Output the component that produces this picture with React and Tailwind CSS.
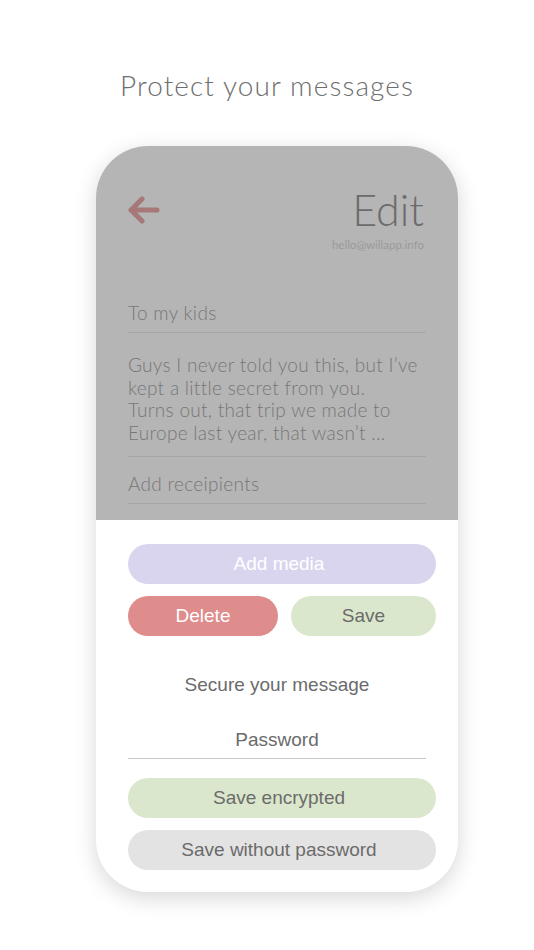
import React from 'react';

const SANS = { fontFamily: '"Liberation Sans", Arial, sans-serif' };

function BackArrow() {
    return (
        <svg width="32" height="28" viewBox="0 0 32 28" fill="none">
            <path d="M14 3 L3 14 L14 25 M3 14 H29" stroke="#a67878" strokeWidth="5" strokeLinecap="round" strokeLinejoin="round" />
        </svg>
    );
}

export default function App() {
    return (
        <div className="min-h-[950px] w-[534px] bg-white flex flex-col items-center font-['Lato',sans-serif]">
            <h1 className="mt-[66px] text-[28px] font-light text-[#6e6e6e] tracking-[1.1px] leading-[38px]">
                Protect your messages
            </h1>

            {/* Phone card */}
            <div className="mt-[42px] ml-[20px] w-[362px] h-[746px] rounded-[52px] overflow-hidden bg-white shadow-[0_6px_22px_rgba(0,0,0,0.16)] flex flex-col">
                {/* Top gray area */}
                <div className="bg-[#b5b5b5] h-[374px] px-[32px] pt-[44px] flex flex-col">
                    <div className="flex items-start justify-between h-[62px]">
                        <div className="mt-[6px]"><BackArrow /></div>
                        <div className="flex flex-col items-end mr-[2px]">
                            <span className="-mt-[6px] text-[43px] font-light text-[#6c6c6c] leading-[52px]">Edit</span>
                            <span className="mt-[2px] text-[11.5px] text-[#9a9a9a] leading-[14px]">hello@willapp.info</span>
                        </div>
                    </div>

                    <div className="mt-[50px] text-[19px] tracking-[0.3px] text-[#777] font-light leading-[22px] border-b border-[#a6a6a6] pb-[8px]">
                        To my kids
                    </div>
                    <div className="mt-[21px] text-[19px] tracking-[0.3px] text-[#777] font-light leading-[22.7px] border-b border-[#a6a6a6] pb-[11px]">
                        Guys I never told you this, but I’ve<br />
                        kept a little secret from you.<br />
                        Turns out, that trip we made to<br />
                        Europe last year, that wasn’t ...
                    </div>
                    <div className="mt-[16px] text-[19px] tracking-[0.3px] text-[#777] font-light leading-[22px] border-b border-[#a6a6a6] pb-[8px]">
                        Add receipients
                    </div>
                </div>

                {/* Bottom white area */}
                <div className="flex-1 pl-[32px] pr-[22px] pt-[24px] flex flex-col" style={SANS}>
                    <button className="h-[40px] w-full pr-[6px] rounded-full bg-[#d9d5ef] text-white text-[19px]">Add media</button>
                    <div className="mt-[12px] flex gap-[13px]">
                        <button className="h-[40px] w-[150px] rounded-full bg-[#de8c8c] text-white text-[19px]">Delete</button>
                        <button className="h-[40px] flex-1 rounded-full bg-[#dbe7cc] text-[#6b6b6b] text-[19px]">Save</button>
                    </div>
                    <div className="mt-[38px] mr-[10px] text-center text-[19px] text-[#6b6b6b] leading-[22px]">Secure your message</div>
                    <div className="mt-[33px] mr-[10px] text-center text-[19px] text-[#6b6b6b] leading-[22px] pb-[7px] border-b border-[#c8c8c8]">
                        Password
                    </div>
                    <button className="mt-[19px] h-[40px] w-full pr-[6px] rounded-full bg-[#dbe7cc] text-[#6b6b6b] text-[19px]">Save encrypted</button>
                    <button className="mt-[12px] h-[40px] w-full pr-[6px] rounded-full bg-[#e3e3e3] text-[#6b6b6b] text-[19px]">Save without password</button>
                </div>
            </div>
        </div>
    );
}
